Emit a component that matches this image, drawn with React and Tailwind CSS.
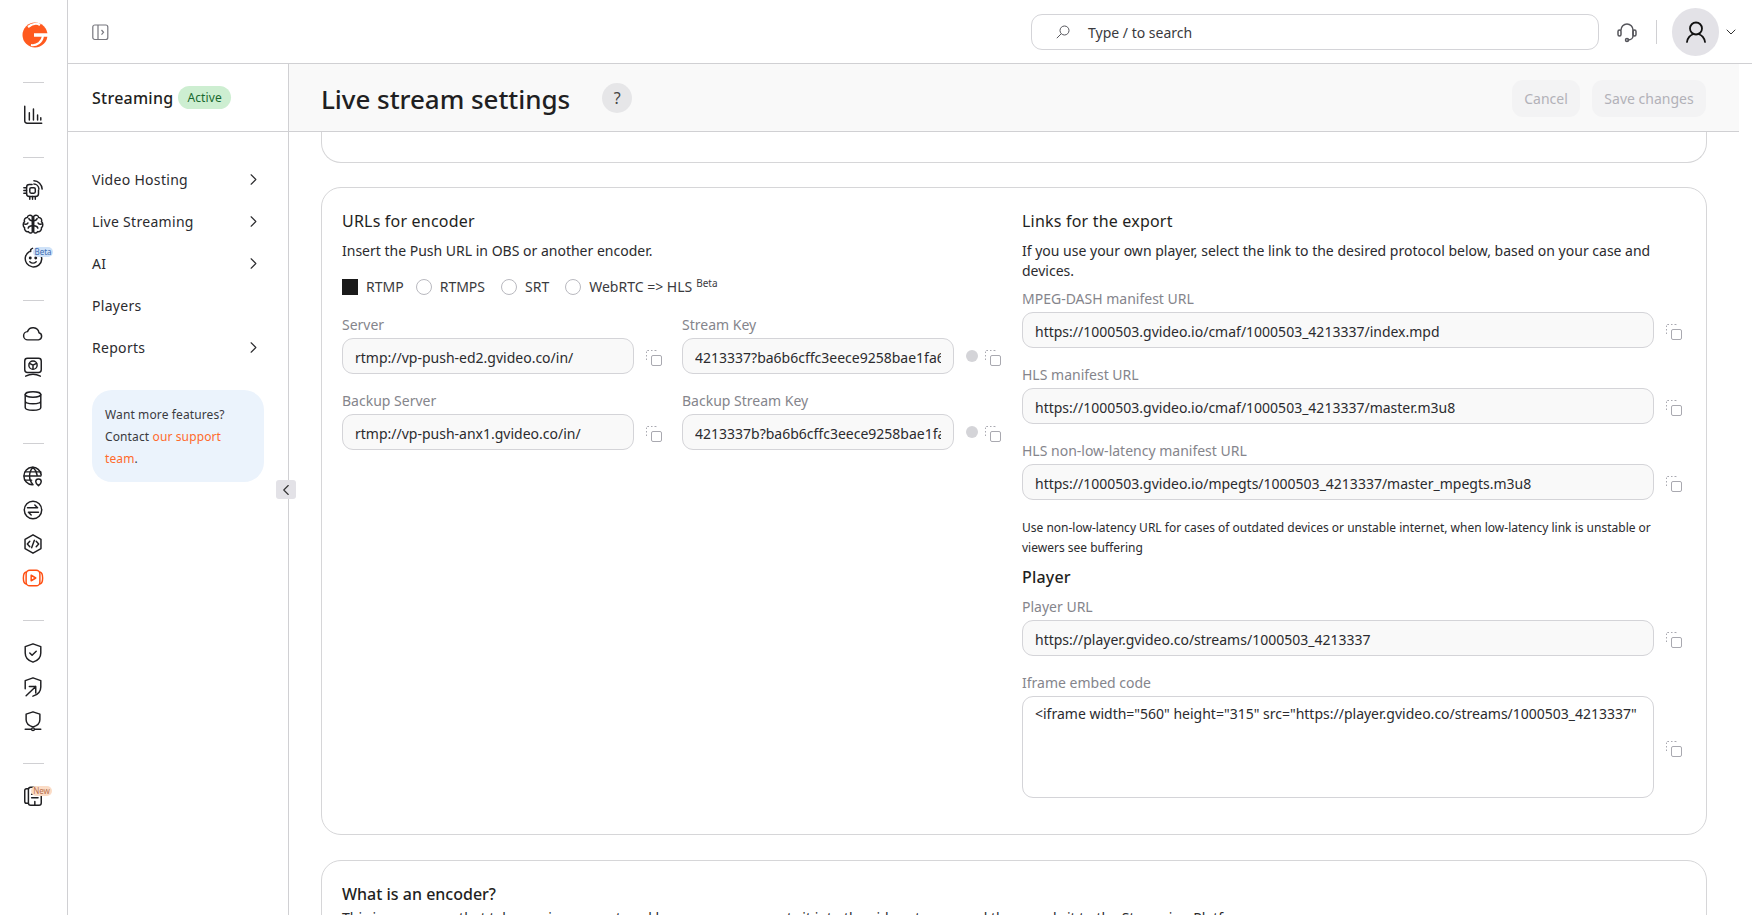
import React from 'react'
import { ChevronRight, ChevronLeft, ChevronDown } from 'lucide-react'

// Shared wrapper for the rail icons
const Ico = ({ children, color = '#1f1f22' }) => (
    <svg width="22" height="22" viewBox="0 0 24 24" fill="none" stroke={color} strokeWidth="1.6" strokeLinecap="round" strokeLinejoin="round">
        {children}
    </svg>
)

const railGroups = [
    [
        <Ico><path d="M3 2.500v16a2.500 2.500 0 0 0 2.500 2.500H21.500" /><path d="M8 17.500v-8M12.500 17.500V5.500M17 17.500v-5.500M20.500 17.500v-2.500" /></Ico>,
    ],
    [
        <Ico><path d="M11 6H8a3 3 0 0 0-3 3v7a3 3 0 0 0 3 3h7a3 3 0 0 0 3-3v-4" /><rect x="8.500" y="9.500" width="6" height="6" rx="1.500" /><path d="M2 9.500h3M2 12.500h3M2 15.500h3M8.500 19v3M11.500 19v3M14.500 19v3M13 2c4.800 0 8.700 3.900 9 9M13 5.500c2.800 0 5.200 2.300 5.500 5.500" /></Ico>,
        <Ico><path d="M11.200 3.500C9 1.500 6 2.500 5.800 5 3.300 5 1.800 7.500 2.800 9.500c-2 1.500-2 5 0 6.500-.5 2.500 1.700 5 4.200 4.300 1 1.700 3.200 2 4.200.5z" /><path d="M12.800 3.500C15 1.500 18 2.500 18.200 5c2.500 0 4 2.500 3 4.500 2 1.500 2 5 0 6.500.5 2.500-1.700 5-4.200 4.300-1 1.700-3.200 2-4.200.5z" /><path d="M11.200 8.500c-2 0-3.200-1-3.700-2.500M2.800 12c1.500.5 3.200 0 3.700-1.200M11.200 14c-2.500 0-4 .8-4.500 2.500M12.800 8.500c2 0 3.200-1 3.700-2.500M21.200 12c-1.500.5-3.200 0-3.700-1.200M12.800 14c2.500 0 4 .8 4.500 2.500" /></Ico>,
        <div className="relative">
            <Ico><path d="M8 5A9 9 0 1 0 19 6.500" /><path d="M9.500 5c-.5-1.500.5-3 2-3.500" /><circle cx="9" cy="12" r=".8" fill="#1f1f22" /><circle cx="15" cy="12" r=".8" fill="#1f1f22" /><path d="M8.500 16c2 2 5 2 7 0" /></Ico>
            <span className="absolute left-[11px] top-0 h-[10px] w-[20px] rounded-full bg-[#cfe2f8] text-center text-[8px] leading-[10px] text-[#3b6cb0]">Beta</span>
        </div>,
    ],
    [
        <Ico><path d="M6.500 19.500a4.500 4.500 0 0 1-.5-9 6.500 6.500 0 0 1 12.500 1.200 4 4 0 0 1-.5 7.800z" /></Ico>,
        <Ico><rect x="3" y="2.500" width="18" height="15.500" rx="3" /><circle cx="12" cy="10" r="4.500" /><path d="M12 10v4M12 10l-3.800-2M12 10l3.800-2M4 22c5-2.500 11-2.500 16 0" /></Ico>,
        <Ico><ellipse cx="12" cy="5" rx="8.500" ry="3" /><path d="M3.500 5v14c0 1.700 3.800 3 8.500 3s8.500-1.300 8.500-3V5M3.500 12c0 1.700 3.800 3 8.500 3s8.500-1.300 8.500-3" /></Ico>,
    ],
    [
        <Ico><path d="M21 11A9.500 9.500 0 1 0 11 21.500" /><path d="M2.500 12h18M12 2.500c-5 5.500-5 13.500 0 19M12 2.500c2.800 2.800 4.200 6 4.500 8.500M3.500 7.500h17M3.500 16.500h7" /><path d="M18 22.500c-1.800-1.500-3-2.800-3-4.300a3 3 0 0 1 6 0c0 1.500-1.200 2.800-3 4.300z" /></Ico>,
        <Ico><circle cx="12" cy="12" r="9.500" /><path d="M6 9.500h11M14 6.500l3 3M18 14.500H7M10 17.500l-3-3" /></Ico>,
        <Ico><path d="M12 2l8.700 5v10L12 22l-8.700-5V7z" /><path d="M8.500 9L5.800 12l2.700 3M15.500 9l2.700 3-2.700 3M13.500 8l-3 8" /></Ico>,
        <Ico color="#ff4f12"><rect x="4.500" y="3.500" width="15" height="17" rx="4" /><path d="M4.500 5.500C2 6 1.500 8 1.500 12s.5 6 3 6.500M19.500 5.500C22 6 22.500 8 22.500 12s-.5 6-3 6.500" /><path d="M10 9v6l5-3z" /></Ico>,
    ],
    [
        <Ico><path d="M12 2l8.500 3v7c0 5-3.500 8.500-8.500 10-5-1.500-8.500-5-8.500-10V5z" /><path d="M8.500 12l2.500 2.500 4.500-4.500" /></Ico>,
        <Ico><path d="M3.500 14V5L12 2l8.500 3v7c0 5-3.500 8.500-8.500 10" /><path d="M8 11.500h7v7M15 11.500L4.500 21.500" /></Ico>,
        <Ico><path d="M12 2l7.500 2.500v6c0 3.500-3 6.500-7.500 8-4.500-1.500-7.500-4.500-7.500-8v-6z" /><circle cx="12" cy="21" r="1.500" /><path d="M3.500 21H10M14 21h6.500" /></Ico>,
    ],
]

const navItems = [
    { name: 'Video Hosting', arrow: true },
    { name: 'Live Streaming', arrow: true },
    { name: 'AI', arrow: true },
    { name: 'Players', arrow: false },
    { name: 'Reports', arrow: true },
]

// Two overlapping squares, the back one dashed
const CopyIcon = () => (
    <svg width="16" height="16" viewBox="0 0 16 16" fill="none" stroke="#a9a9b0" strokeWidth="1" className="mt-[3px] shrink-0">
        <rect x="5.500" y="5.500" width="10" height="10" rx="1.500" />
        <path d="M3 .5H1.500a1 1 0 0 0-1 1V3M.5 5v1.500M.5 8.500V10M5 .5h1.500M8.500 .5H10a1 1 0 0 1 1 1" strokeDasharray="2 1" />
    </svg>
)

const Field = ({ label, value, width, dot }) => (
    <div>
        <label className="block h-[20px] text-sm leading-5 text-[#85858c]">{label}</label>
        <div className="mt-[3px] flex items-center">
            <input
                readOnly
                value={value}
                className={`h-[36px] rounded-[11px] border border-[#d4d4d8] bg-[#f9f9f9] px-3 pt-[2px] text-sm text-[#2b2b2e] outline-none ${width}`}
            />
            {dot && <span className="ml-[12px] h-[12px] w-[12px] shrink-0 rounded-full bg-[#d4d4d8]" />}
            <span className={dot ? 'ml-[7px]' : 'ml-[12px]'}><CopyIcon /></span>
        </div>
    </div>
)

const Radio = ({ label, checked, className = '', children }) => (
    <div className={`flex items-center gap-[8px] ${className}`}>
        {checked
            ? <span className="h-[16px] w-[16px] bg-[#1a1a1a]" />
            : <span className="h-[16px] w-[16px] rounded-full border border-[#b9b9bf] bg-white" />}
        <span className="text-sm leading-5 text-[#3a3a3e]">{label}{children}</span>
    </div>
)

export default function App() {
    return (
        <div className="relative flex h-[915px] w-[1752px] overflow-hidden bg-white font-['Noto_Sans',sans-serif] text-[#1f1f22]">
            {/* Icon rail */}
            <aside className="flex w-[68px] shrink-0 flex-col items-center border-r border-[#d0d0d3]">
                <div className="flex h-[82px] w-full items-start justify-center pl-[3px] pt-[20px]">
                    <svg width="26" height="30" viewBox="0 0 26 30">
                        <circle cx="13" cy="15" r="12.500" fill="#ff5a1f" />
                        <path d="M6 7c4-3 9-4 12-2" stroke="#fff" strokeWidth="2.200" fill="none" />
                        <path d="M12 15h15" stroke="#fff" strokeWidth="3.500" />
                        <path d="M9 25c6 1 11-3 12-9" stroke="#fff" strokeWidth="2" fill="none" />
                    </svg>
                </div>
                {railGroups.map((group, i) => (
                    <div key={i} className="w-full">
                        <div className="mx-auto h-px w-[21px] bg-[#d0d0d3]" />
                        <div className="flex flex-col items-center pb-[25px] pr-[1px] pt-[15px]">
                            {group.map((icon, j) => (
                                <div key={j} className="flex h-[34px] w-full items-center justify-center">{icon}</div>
                            ))}
                        </div>
                    </div>
                ))}
                <div className="mx-auto h-px w-[21px] bg-[#d0d0d3]" />
                <div className="mt-[15px] flex h-[34px] w-full items-center justify-center pr-[1px]">
                    <div className="relative">
                        <Ico><path d="M7 4H5a2 2 0 0 0-2 2v12a2 2 0 0 0 2 2h2" /><rect x="7" y="2.500" width="14" height="19.500" rx="2.500" /><path d="M10.500 10h7M10.500 14h7M14 22v-4" /></Ico>
                        <span className="absolute left-[9px] top-[1px] h-[10px] w-[21px] rounded-full bg-[#fbdcc6] text-center text-[8px] leading-[10px] text-[#b8704f]">New</span>
                    </div>
                </div>
            </aside>

            <div className="flex min-w-0 flex-1 flex-col">
                {/* Top bar */}
                <header className="flex h-[64px] shrink-0 items-center border-b border-[#d0d0d3] pl-[24px]">
                    <svg className="mt-[2px]" width="17" height="17" viewBox="0 0 17 17" fill="none" stroke="#77777e" strokeWidth="1.200">
                        <rect x=".8" y="1" width="15" height="14.500" rx="2" />
                        <path d="M6 1v14.500M9.500 6l2 2.300-2 2.300" />
                    </svg>
                    <div className="ml-[922px] flex h-[36px] w-[568px] items-center rounded-[11px] border border-[#d4d4d8] pl-[24px]">
                        <svg width="14" height="14" viewBox="0 0 14 14" fill="none" stroke="#55555b" strokeWidth="1">
                            <circle cx="8.500" cy="5.500" r="4.500" />
                            <path d="M5.200 8.800L.8 13.200" />
                        </svg>
                        <span className="ml-[18px] pt-[2px] text-sm text-[#3a3a3e]">Type / to search</span>
                    </div>
                    <svg className="ml-[17px]" width="22" height="22" viewBox="0 0 22 22" fill="none" stroke="#55555b" strokeWidth="1.500" strokeLinecap="round">
                        <path d="M5 9a6 6 0 0 1 12 0v6c0 2-2 4-5 4" />
                        <rect x="2" y="9" width="3" height="6" rx="1.500" />
                        <rect x="17" y="9" width="3" height="6" rx="1.500" />
                        <circle cx="11" cy="19" r="1.500" />
                    </svg>
                    <div className="ml-[18px] h-[24px] w-px bg-[#d0d0d3]" />
                    <div className="ml-[15px] flex h-[48px] w-[47px] items-center justify-center rounded-full bg-[#e3e2e7]">
                        <svg width="22" height="22" viewBox="0 0 22 22" fill="none" stroke="#111" strokeWidth="1.800" strokeLinecap="round">
                            <circle cx="11" cy="7.500" r="6" />
                            <path d="M2 21c.5-4 3.500-7 5.500-7.500M20 21c-.5-4-3.500-7-5.500-7.500" />
                        </svg>
                    </div>
                    <ChevronDown size={16} strokeWidth={1.4} className="ml-[4px] text-[#222]" />
                </header>

                <div className="flex min-h-0 flex-1">
                    {/* Section sidebar */}
                    <nav className="w-[221px] shrink-0 border-r border-[#d0d0d3]">
                        <div className="flex h-[68px] items-center border-b border-[#d0d0d3] pl-[24px]">
                            <span className="mt-[1px] text-base font-medium tracking-[0.25px]">Streaming</span>
                            <span className="ml-[5px] rounded-full bg-[#cdeed1] px-[9px] py-[2px] text-xs leading-[19px] tracking-[0.12px] text-[#17692f]">Active</span>
                        </div>
                        <div className="px-[24px] pt-[27px]">
                            {navItems.map((item) => (
                                <div key={item.name} className="flex h-[42px] items-center justify-between text-sm tracking-[0.3px] text-[#2b2b2e]">
                                    <span>{item.name}</span>
                                    {item.arrow && <ChevronRight size={19} strokeWidth={1.4} className="-mt-[2px] mr-[1px]" />}
                                </div>
                            ))}
                            <div className="mt-[21px] h-[92px] w-[172px] rounded-[20px] bg-[#ebf3fc] px-[13px] py-[14px] text-xs leading-[22px] tracking-[0.12px] text-[#3a3a3e]">
                                Want more features?
                                <br />
                                Contact <span className="text-[#ff6a2b]">our support team</span>.
                            </div>
                        </div>
                    </nav>

                    {/* Main content */}
                    <main className="mr-[13px] min-w-0 flex-1 overflow-hidden">
                        <div className="flex h-[68px] items-center border-b border-[#d0d0d3] bg-[#f9f9f9] pl-[32px] pr-[33px]">
                            <h1 className="mt-[2px] text-[26px] font-medium leading-9 tracking-[-0.05px]">Live stream settings</h1>
                            <span className="ml-[32px] flex h-[30px] w-[30px] items-center justify-center rounded-full bg-[#e6e6e8] text-base text-[#444]">?</span>
                            <button className="ml-auto mt-[2px] h-[37px] w-[68px] rounded-[11px] bg-[#f3f3f4] text-sm text-[#b2b1b8]">Cancel</button>
                            <button className="ml-[12px] mt-[2px] h-[37px] w-[114px] rounded-[11px] bg-[#f3f3f4] text-sm text-[#b2b1b8]">Save changes</button>
                        </div>

                        <div className="pl-[32px] pr-[32px]">
                            {/* Bottom of the card scrolled away */}
                            <div className="h-[31px] rounded-b-[20px] border border-t-0 border-[#d6d6d8]" />

                            <section className="mt-[24px] flex rounded-[20px] border border-[#d6d6d8] pb-[36px] pl-[20px] pr-[21px] pt-[21px]">
                                <div className="w-[680px] shrink-0">
                                    <h2 className="text-base leading-6 tracking-[0.2px]">URLs for encoder</h2>
                                    <p className="mt-[8px] text-sm leading-5 text-[#2b2b2e]">Insert the Push URL in OBS or another encoder.</p>
                                    <div className="mt-[16px] flex items-center gap-[16px]">
                                        <Radio label="RTMP" checked />
                                        <Radio label="RTMPS" className="-ml-[4px]" />
                                        <Radio label="SRT" />
                                        <Radio label="WebRTC => HLS">
                                            <sup className="ml-[4px] text-[10px]">Beta</sup>
                                        </Radio>
                                    </div>
                                    <div className="mt-[18px] grid grid-cols-[340px_1fr] gap-y-[17px]">
                                        <Field label="Server" value="rtmp://vp-push-ed2.gvideo.co/in/" width="w-[292px]" />
                                        <Field label="Stream Key" value="4213337?ba6b6cffc3eece9258bae1fa6c7d2e" width="w-[272px]" dot />
                                        <Field label="Backup Server" value="rtmp://vp-push-anx1.gvideo.co/in/" width="w-[292px]" />
                                        <Field label="Backup Stream Key" value="4213337b?ba6b6cffc3eece9258bae1fa6c7d2e" width="w-[272px]" dot />
                                    </div>
                                </div>

                                <div className="min-w-0 flex-1">
                                    <h2 className="text-base leading-6 tracking-[0.2px]">Links for the export</h2>
                                    <p className="mt-[8px] text-sm leading-5 text-[#2b2b2e]">If you use your own player, select the link to the desired protocol below, based on your case and devices.</p>
                                    <div className="mt-[8px] flex flex-col gap-[17px]">
                                        <Field label="MPEG-DASH manifest URL" value="https://1000503.gvideo.io/cmaf/1000503_4213337/index.mpd" width="w-[632px]" />
                                        <Field label="HLS manifest URL" value="https://1000503.gvideo.io/cmaf/1000503_4213337/master.m3u8" width="w-[632px]" />
                                        <Field label="HLS non-low-latency manifest URL" value="https://1000503.gvideo.io/mpegts/1000503_4213337/master_mpegts.m3u8" width="w-[632px]" />
                                    </div>
                                    <p className="mt-[18px] text-xs leading-5 text-[#2b2b2e]">Use non-low-latency URL for cases of outdated devices or unstable internet, when low-latency link is unstable or viewers see buffering</p>
                                    <h2 className="mt-[7px] text-base font-medium leading-6 tracking-[0.2px]">Player</h2>
                                    <div className="mt-[8px]">
                                        <Field label="Player URL" value="https://player.gvideo.co/streams/1000503_4213337" width="w-[632px]" />
                                    </div>
                                    <div className="mt-[17px]">
                                        <label className="block h-[20px] text-sm leading-5 text-[#85858c]">Iframe embed code</label>
                                        <div className="mt-[3px] flex items-center">
                                            <textarea
                                                readOnly
                                                value={'<iframe width="560" height="315" src="https://player.gvideo.co/streams/1000503_4213337"'}
                                                className="h-[102px] w-[632px] resize-none rounded-[11px] border border-[#d4d4d8] px-3 py-[7px] text-sm leading-5 text-[#2b2b2e] outline-none"
                                            />
                                            <span className="ml-[12px]"><CopyIcon /></span>
                                        </div>
                                    </div>
                                </div>
                            </section>

                            <section className="mt-[25px] rounded-[20px] border border-[#d6d6d8] px-[20px] pb-[21px] pt-[21px]">
                                <h2 className="text-base font-medium leading-6">What is an encoder?</h2>
                                <p className="mt-[2px] text-sm leading-5 text-[#2b2b2e]">This is a program that takes an image captured by a camera, converts it into the video stream, and then sends it to the Streaming Platform.</p>
                            </section>
                        </div>
                    </main>
                </div>
            </div>

            {/* Sidebar collapse handle */}
            <button className="absolute left-[276px] top-[480px] flex h-[19px] w-[20px] items-center justify-center rounded-[3px] bg-[#e3e2e7]">
                <ChevronLeft size={18} strokeWidth={1.5} className="text-[#333]" />
            </button>
        </div>
    )
}
